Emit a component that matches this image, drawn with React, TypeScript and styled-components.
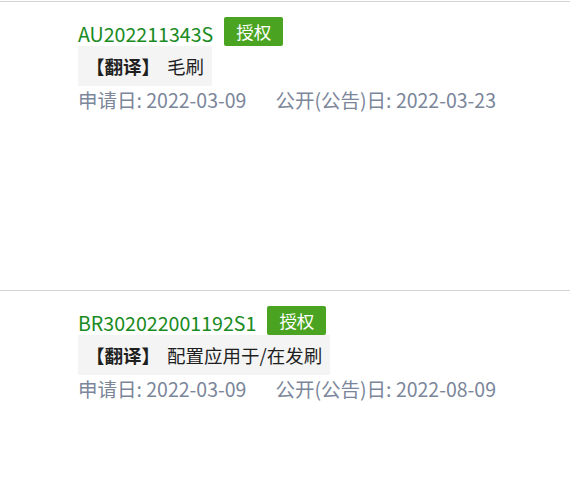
import * as React from 'react';
import styled, { createGlobalStyle } from 'styled-components';

const GlobalStyle = createGlobalStyle`
  body {
    margin: 0;
    background: #ffffff;
    font-family: "Noto Sans CJK SC", "Noto Sans", sans-serif;
  }
`;

type Patent = {
  number: string;
  status: string;
  title: string;
  applyDate: string;
  publishDate: string;
};

const patents: Patent[] = [
  { number: 'AU202211343S', status: '授权', title: '毛刷', applyDate: '2022-03-09', publishDate: '2022-03-23' },
  { number: 'BR302022001192S1', status: '授权', title: '配置应用于/在发刷', applyDate: '2022-03-09', publishDate: '2022-08-09' },
];
//////////////////////////////////////////////////////////////////////////////////////////////////////
const List = styled.div`
  padding-top: 1px;
`;

const Item = styled.div`
  height: 274px;
  border-top: 1px solid #d4d4d4;
  padding: 14px 0 0 78px;
`;

const TitleRow = styled.div`
  display: flex;
  align-items: center;
  gap: 11px;
  height: 30px;
`;

const Number = styled.a`
  color: #1a8a22;
  font-size: 19.6px;
  line-height: 29px;
  text-decoration: none;
  padding-top: 4px;
`;

const Badge = styled.span`
  display: inline-flex;
  align-items: center;
  justify-content: center;
  height: 29px;
  padding: 0 12px;
  border-radius: 2px;
  background: #4aa421;
  color: #ffffff;
  font-size: 17.5px;
`;

const Translation = styled.div`
  display: inline-flex;
  align-items: center;
  height: 40px;
  padding: 0 8px;
  background: #f4f4f4;
  color: #1f1f1f;
  font-size: 18.5px;
`;

const Label = styled.b`
  font-weight: 700;
  margin-right: 7px;
`;

const DateRow = styled.div`
  display: flex;
  gap: 29px;
  color: #7b869a;
  font-size: 19.5px;
  line-height: 28px;
`;
//////////////////////////////////////////////////////////////////////////////////////////////////////
const PatentItem = ({ patent }: { patent: Patent }) => (
  <Item>
    <TitleRow>
      <Number href="#">{patent.number}</Number>
      <Badge>{patent.status}</Badge>
    </TitleRow>
    <Translation>
      <Label>【翻译】</Label>
      {patent.title}
    </Translation>
    <DateRow>
      <span>申请日: {patent.applyDate}</span>
      <span>公开(公告)日: {patent.publishDate}</span>
    </DateRow>
  </Item>
);

export default function App() {
  return (
    <>
      <GlobalStyle />
      <List>
        {patents.map(p => (
          <PatentItem key={p.number} patent={p} />
        ))}
      </List>
    </>
  );
}
